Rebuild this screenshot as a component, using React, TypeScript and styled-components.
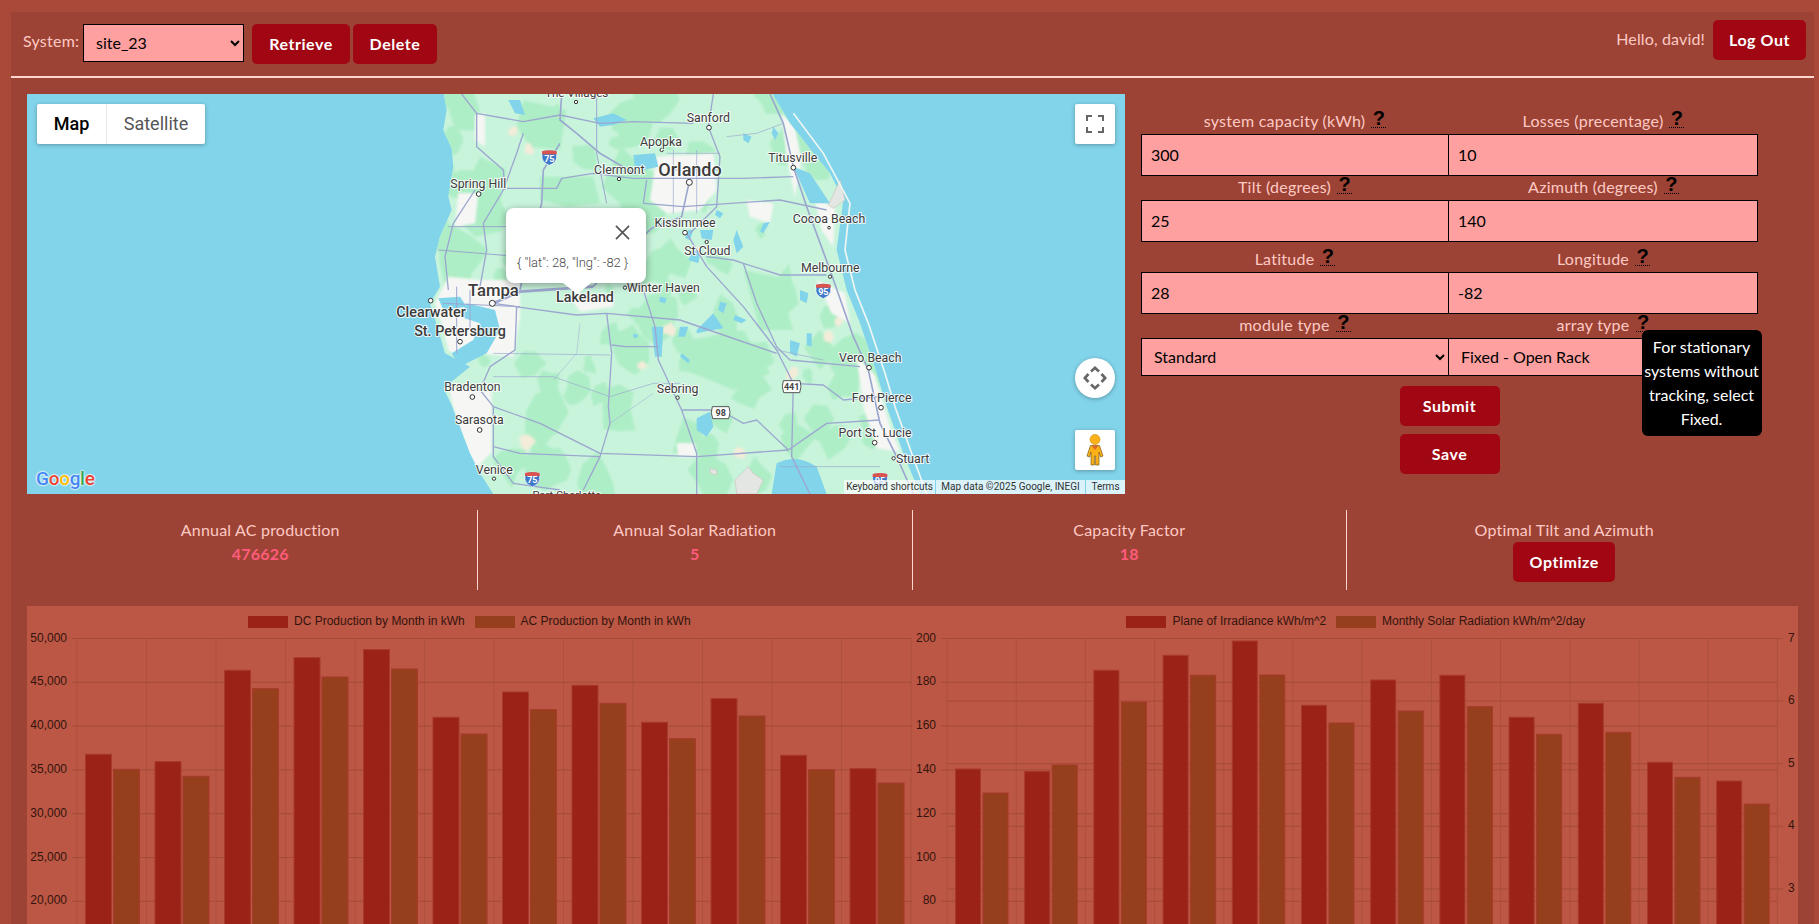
import React from "react";
import styled, { createGlobalStyle } from "styled-components";

const UI = `Lato, "Noto Sans", sans-serif`;

const Global = createGlobalStyle`
  html, body { margin: 0; padding: 0; height: 924px; overflow: hidden; background: #a8493a; }
  * { box-sizing: border-box; }
  body { font-family: ${UI}; font-size: 16px; }
`;

const Page = styled.div`
  padding: 12px 5px 0 11px;
  height: 924px;
`;
const Panel = styled.main`
  background: #9c4335;
  height: 912px;
  overflow: hidden;
  color: #ffc9c4;
`;
const Header = styled.header`
  height: 64px;
  display: flex;
  justify-content: space-between;
  padding: 8px 8px 0 12px;
`;
const HeaderGroup = styled.div`
  display: flex;
  align-items: flex-start;
`;
const SystemLabel = styled.label`
  line-height: 34px;
  height: 36px;
  margin-top: 4px;
  width: 60px;
  letter-spacing: 0.25px;
`;
const SystemSelect = styled.select`
  width: 161px;
  height: 38px;
  margin-top: 4px;
  background: #ffa0a0;
  border: 1px solid #000;
  color: #000;
  font: 16px ${UI};
  padding: 0 8px 2px;
  border-radius: 0;
`;
const Button = styled.button<{ $w?: number }>`
  height: 40px;
  width: ${(p) => (p.$w ? `${p.$w}px` : "auto")};
  background: #a00713;
  color: #fff;
  border: 0;
  border-radius: 5px;
  font: 700 16px ${UI};
  letter-spacing: 0.55px;
  padding: 0 0 2px;
`;
const HeadBtn = styled(Button)<{ $ml: number }>`
  margin-top: 4px;
  margin-left: ${(p) => p.$ml}px;
`;
const Hello = styled.span`
  line-height: 38px;
  margin-right: 8px;
  letter-spacing: 0.15px;
`;
const Rule = styled.hr`
  margin: 0;
  border: 0;
  height: 2px;
  background: #ffd5d0;
`;
const TopRow = styled.section`
  display: flex;
  padding: 16px 0 0 16px;
  height: 432px;
`;
const MapBox = styled.div`
  position: relative;
  width: 1098px;
  height: 400px;
  overflow: hidden;
  background: #82d4ea;
  font-family: Roboto, sans-serif;
`;
const MapArt = styled.svg`
  display: block;
  width: 1098px;
  height: 400px;
`;
const Land = styled.path`fill: #c9f4dc;`;
const Forest = styled.path`fill: #aeeec6;`;
const Urban = styled.path`fill: #f6f6f4;`;
const Sand = styled.path`fill: #f3ecd9;`;
const Water = styled.path`fill: #82d4ea;`;
const Reserve = styled.path`
  fill: #e3e6e2;
  stroke: #c9c6bd;
  stroke-width: 2;
`;
const Island = styled.path`
  fill: none;
  stroke: #eef7f3;
  stroke-width: 5;
`;
const Road = styled.path<{ $w: number }>`
  fill: none;
  stroke: #9ca7cf;
  stroke-width: ${(p) => p.$w};
  stroke-linejoin: round;
`;
const CityDot = styled.circle`
  fill: #fff;
  stroke: #333;
`;
const CityName = styled.text<{ $w: number }>`
  font-family: Roboto, sans-serif;
  font-weight: ${(p) => p.$w};
  fill: #3b3b3b;
  stroke: rgba(255, 255, 255, 0.85);
  stroke-width: 6px;
  paint-order: stroke;
  text-anchor: middle;
  dominant-baseline: central;
`;
const ShieldNum = styled.text`
  font-family: Roboto, sans-serif;
  font-weight: 700;
  font-size: 27px;
  text-anchor: middle;
`;

const MapTypes = styled.div`
  position: absolute;
  left: 10px;
  top: 10px;
  display: flex;
  height: 40px;
  background: #fff;
  border-radius: 2px;
  box-shadow: 0 1px 4px rgba(0, 0, 0, 0.3);
  font-size: 18px;
`;
const MapType = styled.div<{ $on?: boolean; $w: number }>`
  width: ${(p) => p.$w}px;
  line-height: 40px;
  text-align: center;
  color: ${(p) => (p.$on ? "#000" : "#565656")};
  font-weight: ${(p) => (p.$on ? 500 : 400)};
  border-right: ${(p) => (p.$on ? "1px solid #e6e6e6" : "0")};
`;
const MapCtl = styled.div<{ $top: number; $round?: boolean }>`
  position: absolute;
  right: 10px;
  top: ${(p) => p.$top}px;
  width: 40px;
  height: 40px;
  background: #fff;
  border-radius: ${(p) => (p.$round ? "50%" : "2px")};
  box-shadow: 0 1px 4px rgba(0, 0, 0, 0.3);
  display: flex;
  align-items: center;
  justify-content: center;
`;
const Attribution = styled.div`
  position: absolute;
  right: 0;
  bottom: 0;
  height: 14px;
  display: flex;
  font-size: 10px;
  line-height: 14px;
  color: #333;
`;
const AttrItem = styled.span<{ $w: number }>`
  width: ${(p) => p.$w}px;
  text-align: center;
  background: rgba(255, 255, 255, 0.7);
  margin-left: 1px;
  white-space: nowrap;
`;
const Logo = styled.div`
  position: absolute;
  left: 9px;
  bottom: 5px;
  font: 500 19px/21px Roboto, sans-serif;
  letter-spacing: -0.3px;
  text-shadow: 0 0 2px #fff, 0 0 2px #fff, 0 0 2px #fff;
`;
const LogoCh = styled.span<{ $c: string }>`
  color: ${(p) => p.$c};
`;
const InfoWin = styled.div`
  position: absolute;
  left: 479px;
  top: 114px;
  width: 140px;
  height: 75px;
  background: #fff;
  border-radius: 8px;
  box-shadow: 0 2px 7px 1px rgba(0, 0, 0, 0.3);
  color: #4a4a4a;
  font-size: 13px;
  font-weight: 300;
  padding: 47px 0 0 11px;
  white-space: nowrap;
  &::after {
    content: "";
    position: absolute;
    left: 57px;
    top: 75px;
    border-left: 14px solid transparent;
    border-right: 14px solid transparent;
    border-top: 11px solid #fff;
  }
`;
const InfoClose = styled.svg`
  position: absolute;
  right: 16px;
  top: 17px;
  width: 15px;
  height: 15px;
`;

const FormCol = styled.form`
  width: 617px;
  margin-left: 16px;
  padding-top: 16px;
`;
const FieldGrid = styled.div<{ $mt?: number }>`
  display: grid;
  grid-template-columns: 308px 309px;
  margin-top: ${(p) => p.$mt ?? 0}px;
`;
const FieldLabel = styled.label`
  height: 24px;
  line-height: 22px;
  text-align: center;
  letter-spacing: 0.25px;
  white-space: nowrap;
`;
const Help = styled.span`
  position: relative;
  display: inline-block;
  width: 15px;
  height: 16px;
  margin-left: 6px;
  border-bottom: 1px dotted #000;
  color: #000;
  font: 700 20px/12px "Liberation Sans", sans-serif;
  text-align: center;
  vertical-align: 2px;
  letter-spacing: 0;
`;
const Tip = styled.span`
  position: absolute;
  left: 6px;
  top: 14px;
  width: 120px;
  padding: 5px 0;
  background: #000;
  color: #fff;
  border-radius: 6px;
  font: 400 16px/24px ${UI};
  white-space: normal;
  z-index: 2;
`;
const TextField = styled.input<{ $shift?: boolean }>`
  height: 42px;
  width: ${(p) => (p.$shift ? "310px" : "308px")};
  margin-left: ${(p) => (p.$shift ? "-1px" : "0")};
  background: #ffa0a0;
  border: 1px solid #000;
  border-radius: 0;
  font: 16px ${UI};
  color: #000;
  padding: 0 9px 2px;
`;
const SelField = styled.select<{ $shift?: boolean }>`
  height: 38px;
  width: ${(p) => (p.$shift ? "310px" : "308px")};
  margin-left: ${(p) => (p.$shift ? "-1px" : "0")};
  background: #ffa0a0;
  border: 1px solid #000;
  border-radius: 0;
  font: 16px ${UI};
  color: #000;
  padding: 0 8px 2px;
`;
const Actions = styled.div`
  display: flex;
  flex-direction: column;
  align-items: center;
  gap: 8px;
  margin-top: 10px;
`;
const Stats = styled.section`
  display: grid;
  grid-template-columns: repeat(4, 434.5px);
  margin-left: 32.5px;
  height: 80px;
`;
const Stat = styled.div<{ $last?: boolean }>`
  padding-top: 8px;
  text-align: center;
  border-right: ${(p) => (p.$last ? "0" : "1px solid #ffd5d0")};
  line-height: 24px;
  letter-spacing: 0.2px;
`;
const StatValue = styled.div`
  color: #ff5c7c;
  font-weight: 700;
`;
const ChartPanel = styled.section`
  margin: 16px 0 0 16px;
  width: 1771px;
  height: 318px;
  background: #bb5744;
  display: flex;
  overflow: hidden;
`;
const ChartSvg = styled.svg`
  display: block;
  flex: none;
`;
const Tick = styled.text<{ $end?: boolean }>`
  font: 12px "Liberation Sans", Arial, sans-serif;
  fill: #35140e;
  text-anchor: ${(p) => (p.$end ? "end" : "start")};
  dominant-baseline: central;
`;
const HGrid = styled.line`stroke: #a64b3a;`;
const VGrid = styled.line`stroke: #ad5040;`;
const Bar = styled.rect<{ $c: string }>`
  fill: ${(p) => p.$c};
  stroke: #a83a2b;
  stroke-width: 1;
`;
const Swatch = styled.rect<{ $c: string }>`
  fill: ${(p) => p.$c};
`;

const DC = "#9a2216";
const AC = "#953f1c";

const toY = (z: number) => 600 + z / 3;

const chart1 = {
  a: [463, 485, 211, 173, 149, 352, 276, 256, 367, 296, 466, 506],
  b: [508, 529, 266, 231, 207, 402, 329, 310, 416, 348, 509, 549],
};
const chart2 = {
  a: [507, 514, 211, 166, 123, 316, 240, 226, 352, 310, 487, 543],
  b: [579, 495, 306, 226, 225, 369, 333, 320, 403, 397, 532, 612],
};

const Legend = ({ x1, t1, x2, t2, l1, l2 }: { x1: number; t1: number; x2: number; t2: number; l1: string; l2: string }) => (
  <>
    <Swatch $c={DC} x={x1} y={616} width={40} height={12} />
    <Tick x={t1} y={621}>{l1}</Tick>
    <Swatch $c={AC} x={x2} y={616} width={40} height={12} />
    <Tick x={t2} y={621}>{l2}</Tick>
  </>
);

const ProductionChart = () => {
  const ys = [0, 1, 2, 3, 4, 5, 6, 7].map((i) => 638.5 + i * 43.8);
  const labels = ["50,000", "45,000", "40,000", "35,000", "30,000", "25,000", "20,000", "15,000"];
  const step = 69.5;
  return (
    <ChartSvg width={885} height={318} viewBox="27 606 885 318">
      <Legend x1={248} t1={294} x2={475} t2={520.5} l1="DC Production by Month in kWh" l2="AC Production by Month in kWh" />
      {Array.from({ length: 13 }, (_, i) => (
        <VGrid key={i} x1={77 + i * step} x2={77 + i * step} y1={638} y2={924} />
      ))}
      {ys.map((y, i) => (
        <React.Fragment key={i}>
          <HGrid x1={72} x2={912} y1={y} y2={y} />
          <Tick $end x={67} y={y - 1}>{labels[i]}</Tick>
        </React.Fragment>
      ))}
      {chart1.a.map((z, i) => (
        <React.Fragment key={i}>
          <Bar $c={DC} x={85.5 + i * step} y={toY(z)} width={26} height={400} />
          <Bar $c={AC} x={113.5 + i * step} y={toY(chart1.b[i])} width={26} height={400} />
        </React.Fragment>
      ))}
    </ChartSvg>
  );
};

const RadiationChart = () => {
  const ys = [0, 1, 2, 3, 4, 5, 6, 7].map((i) => 638.5 + i * 43.8);
  const labels = ["200", "180", "160", "140", "120", "100", "80", "60"];
  const right = ["7", "6", "5", "4", "3", "2"];
  const step = 69.2;
  return (
    <ChartSvg width={886} height={318} viewBox="912 606 886 318">
      <Legend x1={1126} t1={1172.6} x2={1336} t2={1382} l1="Plane of Irradiance kWh/m^2" l2="Monthly Solar Radiation kWh/m^2/day" />
      {Array.from({ length: 13 }, (_, i) => (
        <VGrid key={i} x1={947 + i * step} x2={947 + i * step} y1={638} y2={924} />
      ))}
      {ys.map((y, i) => (
        <React.Fragment key={i}>
          <HGrid x1={941} x2={1777.5} y1={y} y2={y} />
          <Tick $end x={936} y={y - 1}>{labels[i]}</Tick>
        </React.Fragment>
      ))}
      {right.map((t, i) => {
        const y = 638.5 + i * 62.6;
        return (
          <React.Fragment key={t}>
            <HGrid x1={947} x2={1783} y1={y} y2={y} />
            <Tick x={1788} y={y - 1}>{t}</Tick>
          </React.Fragment>
        );
      })}
      {chart2.a.map((z, i) => (
        <React.Fragment key={i}>
          <Bar $c={DC} x={955.5 + i * step} y={toY(z)} width={25} height={400} />
          <Bar $c={AC} x={983 + i * step} y={toY(chart2.b[i])} width={25} height={400} />
        </React.Fragment>
      ))}
    </ChartSvg>
  );
};

/* seeded blobs give the land the mottled look of the map tiles */
const seeded = (seed: number) => {
  let s = seed;
  return () => {
    s = (s * 16807) % 2147483647;
    return (s - 1) / 2147483646;
  };
};
const makeBlobs = (seed: number, count: number, x0: number, y0: number, x1: number, y1: number, size: number) => {
  const r = seeded(seed);
  const out: string[] = [];
  for (let i = 0; i < count; i++) {
    const cx = x0 + r() * (x1 - x0);
    const cy = y0 + r() * (y1 - y0);
    const pts: string[] = [];
    const n = 6 + Math.floor(r() * 4);
    const base = size * (0.4 + r());
    for (let k = 0; k < n; k++) {
      const a = (k / n) * Math.PI * 2;
      const rad = base * (0.55 + r() * 0.8);
      pts.push(`${(cx + Math.cos(a) * rad).toFixed(0)},${(cy + Math.sin(a) * rad * 1.2).toFixed(0)}`);
    }
    out.push(`M${pts.join(" L")}Z`);
  }
  return out;
};

const forests = [
  ...makeBlobs(7, 95, 180, 10, 1500, 1210, 46),
  "M300,200 L380,240 L360,340 L300,390 L250,350 L270,260Z",
  "M480,260 L640,260 L660,340 L560,350 L480,330Z",
  "M430,30 L560,60 L540,180 L450,170 L410,110Z",
  "M880,760 L1090,720 L1170,850 L1060,900 L940,850Z",
  "M1090,540 L1190,560 L1240,720 L1140,720Z",
];
const sands = makeBlobs(23, 14, 400, 100, 1450, 1180, 16);
const urbans = [
  "M205,560 L300,570 L420,570 L420,680 L400,800 L300,790 L255,820 L205,780 L185,700 L165,640Z",
  "M235,310 L295,310 L285,400 L225,410Z",
  "M285,75 L315,70 L315,170 L285,150Z",
  "M830,200 L1000,190 L1010,300 L960,360 L860,370 L810,330Z",
  "M570,620 L700,610 L700,650 L600,665Z",
  "M205,890 L335,905 L335,1085 L290,1135 L255,1065 L220,950Z",
  "M1205,70 L1245,115 L1265,210 L1245,320 L1220,200Z",
  "M1305,330 L1365,350 L1360,470 L1325,420Z",
  "M1310,570 L1395,610 L1410,700 L1355,670Z",
  "M1430,800 L1485,855 L1530,1010 L1560,1085 L1490,1075 L1450,950Z",
  "M1100,330 L1180,340 L1170,400 L1110,380Z",
  "M890,1060 L945,1060 L950,1100 L895,1100Z",
];
const lakes = [
  "M760,195 L825,190 L835,230 L790,240 L765,235Z",
  "M385,30 L420,30 L435,75 L405,70Z",
  "M640,85 L700,70 L740,90 L700,105 L660,110Z",
  "M260,640 L345,660 L360,720 L320,790 L240,830 L215,790 L280,750 L300,700 L240,680Z",
  "M175,625 L240,620 L260,650 L190,660Z",
  "M950,720 L1000,670 L1030,715 L1000,720 L950,730Z",
  "M900,710 L925,710 L915,740 L895,740Z",
  "M950,985 L990,965 L1000,1010 L980,1040 L950,1020Z",
  "M940,480 L960,490 L955,520 L925,510Z",
  "M960,420 L1000,420 L995,450 L965,445Z",
  "M1150,400 L1170,395 L1150,430 L1140,425Z",
  "M1190,1120 Q1250,1090 1310,1130 L1340,1212 L1175,1212Z",
  "M1240,230 L1290,250 L1350,340 L1290,340Z",
  "M1230,750 L1260,760 L1250,800 L1230,790Z",
  "M1070,420 L1090,470 L1070,490 L1060,450Z",
  "M815,710 L850,710 L845,800 L825,800Z",
  "M1280,730 L1295,730 L1295,770 L1280,765Z",
  "M905,790 L930,810 L925,820 L900,800Z",
  "M1090,130 L1115,140 L1105,160 L1090,150Z",
  "M1180,110 L1195,130 L1185,150 L1175,130Z",
  "M1260,600 L1285,610 L1280,640 L1260,630Z",
  "M1065,675 L1100,690 L1085,700 L1060,690Z",
  "M1020,635 L1040,640 L1030,670 L1015,660Z",
  "M760,730 L775,735 L770,745 L760,742Z",
  "M1010,360 L1030,370 L1020,385 L1005,375Z",
  "M940,420 L930,450 L915,445 L925,420Z",
  "M840,620 L860,625 L855,640 L838,635Z",
];
const roads: [string, number][] = [
  ["M245,12 L290,70 L290,170 L370,240 L375,300", 4],
  ["M290,70 L430,95 L540,75 L660,100 L760,95 L940,100", 4],
  ["M430,130 L410,190 L370,300 L310,400 L320,480 L300,590", 4],
  ["M545,12 L540,90 L590,130 L660,190 L770,255", 5],
  ["M650,12 L650,190 L680,340", 3],
  ["M540,160 L490,240 L485,340 L440,500 L420,600", 5],
  ["M285,300 L220,400 L195,500 L205,600", 4],
  ["M380,295 L530,295 L545,265 L640,250 L760,265 L930,265 L1090,265 L1240,260", 4],
  ["M930,265 L905,380 L815,415 L700,520 L640,590", 5],
  ["M640,590 L420,605 L340,640", 8],
  ["M790,340 L910,350 L1200,330 L1340,360", 4],
  ["M790,340 L800,270", 4],
  ["M1000,12 L985,110 L1020,200 L1010,350 L930,430", 4],
  ["M1170,12 L1210,100 L1240,230 L1280,350 L1350,540 L1420,740 L1465,840 L1500,1000 L1550,1100 L1600,1212", 5],
  ["M920,430 L980,530 L1090,650 L1190,780 L1240,880 L1235,1100 L1290,1212", 4],
  ["M1090,520 L1200,555 L1340,555", 4],
  ["M980,500 L1060,510 L1090,520 L1130,640 L1190,770 L1230,810 L1440,830", 4],
  ["M405,650 L590,675 L680,670 L900,690 L1030,735 L1190,790", 4],
  ["M680,670 L695,790 L685,950 L690,1000 L660,1100 L610,1200", 4],
  ["M790,600 L825,710 L835,810 L905,960 L950,1090 L950,1212", 4],
  ["M695,765 L735,770 L835,770", 4],
  ["M340,950 L480,1000 L660,1090 L950,1100 L1225,1080 L1340,1000 L1500,990", 4],
  ["M340,640 L410,650 L405,780 L330,830 L300,900 L340,950 L340,1100 L400,1180 L540,1200", 4],
  ["M905,960 L1020,960 L1090,1000 L1130,990 L1225,1080", 4],
  ["M1240,880 L1330,885 L1390,930 L1500,920", 4],
  ["M1200,1130 L1500,1130", 2],
  ["M340,860 L520,860 L690,920 L820,880 L900,880", 2],
  ["M340,790 L690,795", 2],
  ["M205,410 L420,410 L500,400", 3],
  ["M175,480 L300,490 L420,500", 3],
  ["M340,1070 L420,1090 L660,1100", 4],
  ["M1210,100 L1130,130 L1040,140", 2],
  ["M860,190 L1020,190 M860,240 L1020,240 M880,180 L880,370 M950,180 L950,370", 2],
  ["M230,590 L230,790 M270,600 L270,720 M190,640 L420,650", 3],
  ["M1130,700 L1190,780 L1330,810", 2],
  ["M600,700 L590,790 L520,870", 1.5],
  ["M690,1000 L820,910", 1.5],
];
type City = { n: string; x: number; y: number; s: number; w?: number; d?: [number, number, number?] };
const cities: City[] = [
  { n: "The Villages", x: 590, y: 10, s: 35, d: [588, 36] },
  { n: "Sanford", x: 985, y: 85, s: 37, d: [987, 113, 7] },
  { n: "Apopka", x: 843, y: 155, s: 37, d: [845, 180, 5] },
  { n: "Titusville", x: 1238, y: 205, s: 37, d: [1240, 233, 7] },
  { n: "Clermont", x: 718, y: 240, s: 37, d: [717, 267, 5] },
  { n: "Orlando", x: 930, y: 238, s: 54, w: 500, d: [928, 277, 9] },
  { n: "Spring Hill", x: 295, y: 283, s: 37, d: [296, 312, 7] },
  { n: "Kissimmee", x: 915, y: 400, s: 37, d: [915, 428, 7] },
  { n: "Cocoa Beach", x: 1347, y: 388, s: 37, d: [1347, 413, 4] },
  { n: "St Cloud", x: 982, y: 484, s: 37, d: [980, 456, 5] },
  { n: "Melbourne", x: 1351, y: 535, s: 37, d: [1350, 560, 5] },
  { n: "Winter Haven", x: 850, y: 595, s: 37, d: [735, 593, 5] },
  { n: "Tampa", x: 340, y: 600, s: 50, w: 500, d: [337, 640, 9] },
  { n: "Lakeland", x: 615, y: 622, s: 43, w: 500 },
  { n: "Clearwater", x: 153, y: 667, s: 43, w: 500, d: [152, 632, 7] },
  { n: "St. Petersburg", x: 240, y: 722, s: 43, w: 500, d: [240, 755, 7] },
  { n: "Vero Beach", x: 1471, y: 804, s: 37, d: [1467, 833, 7] },
  { n: "Bradenton", x: 277, y: 892, s: 37, d: [277, 921, 7] },
  { n: "Sebring", x: 893, y: 898, s: 37, d: [893, 923, 5] },
  { n: "Fort Pierce", x: 1505, y: 925, s: 37, d: [1503, 953, 7] },
  { n: "Sarasota", x: 298, y: 990, s: 37, d: [299, 1020, 7] },
  { n: "Port St. Lucie", x: 1485, y: 1030, s: 37, d: [1484, 1058, 7] },
  { n: "Venice", x: 343, y: 1140, s: 37, d: [342, 1166, 5] },
  { n: "Stuart", x: 1598, y: 1107, s: 37, d: [1541, 1105, 5] },
  { n: "Port Charlotte", x: 560, y: 1215, s: 33 },
];

const LAND =
  "M190,0 L200,60 L190,120 L215,175 L220,230 L205,320 L215,360 L180,440 L165,500 L180,590 L150,640 L175,720 L195,790 L270,830 L190,895 L215,945 L240,1010 L270,1090 L300,1150 L340,1212 L1620,1212 L1570,1090 L1520,950 L1490,850 L1440,700 L1400,600 L1370,480 L1390,330 L1350,250 L1300,190 L1230,100 L1170,0Z";

const InterstateShield = ({ x, y, n }: { x: number; y: number; n: string }) => (
  <g transform={`translate(${x},${y})`}>
    <path d="M-22,-18 Q0,-24 22,-18 L22,2 Q20,16 0,24 Q-20,16 -22,2Z" fill="#3f78c9" stroke="#fff" strokeWidth={2} />
    <path d="M-22,-18 Q0,-24 22,-18 L22,-9 L-22,-9Z" fill="#d9534f" />
    <ShieldNum x={0} y={13} fill="#fff">{n}</ShieldNum>
  </g>
);
const RouteShield = ({ x, y, n }: { x: number; y: number; n: string }) => (
  <g transform={`translate(${x},${y})`}>
    <path d="M-25,-18 L25,-18 L28,0 L24,18 L-24,18 L-28,0Z" fill="#fff" stroke="#555" strokeWidth={3} strokeLinejoin="round" />
    <ShieldNum x={0} y={9} fill="#444">{n}</ShieldNum>
  </g>
);

const GMap = () => (
  <MapBox>
    <MapArt viewBox="-1059 12 3294 1200">
      <defs>
        <clipPath id="landClip">
          <path d={LAND} />
        </clipPath>
        <filter id="soft" x="-5%" y="-5%" width="110%" height="110%">
          <feGaussianBlur stdDeviation="3" />
        </filter>
      </defs>
      <Land d={LAND} />
      <g clipPath="url(#landClip)">
        <g filter="url(#soft)">
          {forests.map((d) => <Forest key={d} d={d} />)}
          {sands.map((d) => <Sand key={d} d={d} />)}
          {urbans.map((d) => <Urban key={d} d={d} />)}
        </g>
        <Reserve d="M1065,1170 L1105,1130 L1120,1150 L1150,1170 L1130,1212 L1070,1212Z" />
        <Reserve d="M990,1135 L1010,1140 L1010,1155 L990,1150Z" />
      </g>
      {lakes.map((d) => <Water key={d} d={d} />)}
      <Reserve d="M1345,345 L1380,270 L1395,330 L1360,355Z" />
      <Island d="M1240,70 L1330,190 L1410,340 L1395,480 L1425,600 L1465,700 L1515,850 L1545,950 L1595,1090 L1640,1212" />
      {roads.map(([d, w]) => <Road key={d} d={d} $w={w} />)}
      <InterstateShield x={508} y={202} n="75" />
      <InterstateShield x={457} y={1167} n="75" />
      <InterstateShield x={1330} y={602} n="95" />
      <InterstateShield x={1500} y={1170} n="95" />
      <RouteShield x={1235} y={890} n="441" />
      <RouteShield x={1022} y={968} n="98" />
      {cities.map((c) => (
        <React.Fragment key={c.n}>
          {c.d && <CityDot cx={c.d[0]} cy={c.d[1]} r={c.d[2] ?? 5} strokeWidth={3} />}
          <CityName $w={c.w ?? 400} x={c.x} y={c.y} fontSize={c.s}>{c.n}</CityName>
        </React.Fragment>
      ))}
    </MapArt>
    <MapTypes>
      <MapType $on $w={70}>Map</MapType>
      <MapType $w={98}>Satellite</MapType>
    </MapTypes>
    <MapCtl $top={10}>
      <svg width="18" height="18" viewBox="0 0 18 18" fill="none" stroke="#666" strokeWidth="2">
        <path d="M1,6 V1 H6 M12,1 H17 V6 M17,12 V17 H12 M6,17 H1 V12" />
      </svg>
    </MapCtl>
    <MapCtl $top={264} $round>
      <svg width="24" height="24" viewBox="0 0 24 24" fill="none" stroke="#666" strokeWidth="2.6">
        <path d="M8,5.5 L12,1.8 L16,5.5 M18.5,8 L22.2,12 L18.5,16 M16,18.5 L12,22.2 L8,18.5 M5.5,16 L1.8,12 L5.5,8" />
      </svg>
    </MapCtl>
    <MapCtl $top={336}>
      <svg width="18" height="32" viewBox="0 0 18 32">
        <circle cx="9" cy="5.5" r="5" fill="#fbb117" stroke="#c98a10" strokeWidth="0.6" />
        <path d="M4.5,11.5 H13.5 L17,22 L14.5,23 L13,18 V31 H9.6 V22 H8.4 V31 H5 V18 L3.5,23 L1,22Z" fill="#fbb117" stroke="#7a5a1a" strokeWidth="0.7" />
        <path d="M5.5,11.5 H12.5 L9,16Z" fill="#e0662a" />
      </svg>
    </MapCtl>
    <Logo>
      <LogoCh $c="#4285f4">G</LogoCh>
      <LogoCh $c="#ea4335">o</LogoCh>
      <LogoCh $c="#fbbc05">o</LogoCh>
      <LogoCh $c="#4285f4">g</LogoCh>
      <LogoCh $c="#34a853">l</LogoCh>
      <LogoCh $c="#ea4335">e</LogoCh>
    </Logo>
    <Attribution>
      <AttrItem $w={91}>Keyboard shortcuts</AttrItem>
      <AttrItem $w={149}>Map data ©2025 Google, INEGI</AttrItem>
      <AttrItem $w={39}>Terms</AttrItem>
    </Attribution>
    <InfoWin>
      <InfoClose viewBox="0 0 16 16" stroke="#555" strokeWidth="1.8">
        <path d="M1,1 L15,15 M15,1 L1,15" />
      </InfoClose>
      {'{ "lat": 28, "lng": -82 }'}
    </InfoWin>
  </MapBox>
);

const App = () => (
  <Page>
    <Global />
    <Panel>
      <Header>
        <HeaderGroup>
          <SystemLabel>System:</SystemLabel>
          <SystemSelect defaultValue="site_23">
            <option>site_23</option>
          </SystemSelect>
          <HeadBtn $w={98} $ml={8}>Retrieve</HeadBtn>
          <HeadBtn $w={84} $ml={3}>Delete</HeadBtn>
        </HeaderGroup>
        <HeaderGroup>
          <Hello>Hello, david!</Hello>
          <Button $w={93}>Log Out</Button>
        </HeaderGroup>
      </Header>
      <Rule />
      <TopRow>
        <GMap />
        <FormCol>
          <FieldGrid>
            <FieldLabel>system capacity (kWh)<Help>?</Help></FieldLabel>
            <FieldLabel>Losses (precentage)<Help>?</Help></FieldLabel>
            <TextField defaultValue="300" />
            <TextField $shift defaultValue="10" />
          </FieldGrid>
          <FieldGrid>
            <FieldLabel>Tilt (degrees)<Help>?</Help></FieldLabel>
            <FieldLabel>Azimuth (degrees)<Help>?</Help></FieldLabel>
            <TextField defaultValue="25" />
            <TextField $shift defaultValue="140" />
          </FieldGrid>
          <FieldGrid $mt={6}>
            <FieldLabel>Latitude<Help>?</Help></FieldLabel>
            <FieldLabel>Longitude<Help>?</Help></FieldLabel>
            <TextField defaultValue="28" />
            <TextField $shift defaultValue="-82" />
          </FieldGrid>
          <FieldGrid>
            <FieldLabel>module type<Help>?</Help></FieldLabel>
            <FieldLabel>
              array type
              <Help>
                ?
                <Tip>For stationary systems without tracking, select Fixed.</Tip>
              </Help>
            </FieldLabel>
            <SelField defaultValue="Standard">
              <option>Standard</option>
            </SelField>
            <SelField $shift defaultValue="Fixed - Open Rack">
              <option>Fixed - Open Rack</option>
            </SelField>
          </FieldGrid>
          <Actions>
            <Button type="button" $w={100}>Submit</Button>
            <Button type="button" $w={100}>Save</Button>
          </Actions>
        </FormCol>
      </TopRow>
      <Stats>
        <Stat>
          Annual AC production
          <StatValue>476626</StatValue>
        </Stat>
        <Stat>
          Annual Solar Radiation
          <StatValue>5</StatValue>
        </Stat>
        <Stat>
          Capacity Factor
          <StatValue>18</StatValue>
        </Stat>
        <Stat $last>
          Optimal Tilt and Azimuth
          <div>
            <Button $w={102}>Optimize</Button>
          </div>
        </Stat>
      </Stats>
      <ChartPanel>
        <ProductionChart />
        <RadiationChart />
      </ChartPanel>
    </Panel>
  </Page>
);

export default App;
